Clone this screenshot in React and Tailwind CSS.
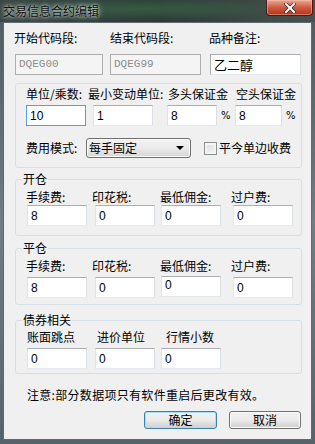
import React from "react";

const font = { fontFamily: '"Noto Sans CJK SC", "Liberation Sans", sans-serif' };

const TextBox = ({ value, width = "w-[60px]", disabled, focused, className = "" }) => {
  let border = "border-[#abadb3] border-t-[#abadb3] border-b-[#e3e9ef] border-r-[#dbdfe6] border-l-[#e2e3ea]";
  if (focused) border = "border-[#569de5]";
  if (disabled) border = "border-[#afafaf]";
  return (
    <div
      className={`${width} h-[21px] border ${border} ${
        disabled ? "bg-[#f4f4f4] text-[#8c8c8c]" : "bg-white text-black"
      } flex items-center pl-[3px] leading-none shrink-0 ${className}`}
    >
      {disabled ? (
        <span className="text-[11px]" style={{ fontFamily: '"Liberation Mono", monospace' }}>
          {value}
        </span>
      ) : (
        <span className="text-[12px]" style={{ fontFamily: '"Liberation Sans", "Noto Sans CJK SC", sans-serif' }}>
          {value}
        </span>
      )}
    </div>
  );
};

const Label = ({ children, className = "" }) => (
  <div className={`text-[12px] leading-[16px] text-black whitespace-nowrap shrink-0 ${className}`}>
    {children}
  </div>
);

const Group = ({ title, className = "", children }) => (
  <div className={`relative ml-[11px] w-[287px] border border-[#d5dfe5] rounded-[3px] ${className}`}>
    {title && (
      <div className="absolute left-[6px] -top-[9px] bg-[#f0f0f0] px-[1px] text-[12px] leading-[16px] text-black">
        {title}
      </div>
    )}
    {children}
  </div>
);

const WinButton = ({ children, primary, className = "" }) => (
  <div
    className={`h-[18px] rounded-[3px] border ${
      primary ? "border-[#3c7fb1] shadow-[inset_0_0_0_1px_#a6dff7]" : "border-[#707070] shadow-[inset_0_0_0_1px_#fcfcfc]"
    } bg-gradient-to-b from-[#f2f2f2] via-[#ebebeb] to-[#cfcfcf] flex items-center justify-center text-[12px] text-black ${className}`}
  >
    {children}
  </div>
);

export default function App() {
  return (
    <div
      className="w-[315px] h-[444px] flex flex-col bg-gradient-to-b from-[#4d5a5e] via-[#6f7d84] to-[#55636b] overflow-hidden"
      style={font}
    >
      {/* title bar */}
      <div className="h-[22px] relative bg-gradient-to-r from-[#3a4745] via-[#2c3b36] to-[#46524f] shrink-0">
        <div className="absolute inset-0 bg-[radial-gradient(ellipse_at_45%_40%,rgba(70,150,90,0.35),transparent_60%)]" />
        <div
          className="absolute left-[3px] top-[3px] text-[12px] leading-[16px] text-[#101010]"
          style={{ textShadow: "0 0 6px rgba(230,240,235,0.9), 0 0 3px rgba(230,240,235,0.9)" }}
        >
          交易信息合约编辑
        </div>
        <div className="absolute left-[266px] top-0 w-[47px] h-[16px] rounded-b-[4px] border border-t-0 border-[#4a1b12] bg-gradient-to-b from-[#e7a897] via-[#cf5a3f] to-[#b3311c] flex items-center justify-center shadow-[inset_0_0_0_1px_rgba(255,200,180,0.45)]">
          <svg width="12" height="10" viewBox="0 0 12 10">
            <path d="M2 1 L10 9 M10 1 L2 9" stroke="#3b2a28" strokeWidth="3.6" strokeLinecap="square" />
            <path d="M2 1 L10 9 M10 1 L2 9" stroke="#ffffff" strokeWidth="2" strokeLinecap="square" />
          </svg>
        </div>
      </div>

      {/* client */}
      <div className="flex-1 mx-[3px] mb-[4px] border border-[#5e686e] bg-[#f0f0f0] flex flex-col">
        {/* row 1 */}
        <div className="flex pl-[10px] mt-[7px]">
          <Label className="w-[96px]">开始代码段:</Label>
          <Label className="w-[99px]">结束代码段:</Label>
          <Label>品种备注:</Label>
        </div>
        <div className="flex pl-[11px] mt-[8px]">
          <TextBox value="DQEG00" width="w-[88px]" disabled />
          <div className="w-[7px]" />
          <TextBox value="DQEG99" width="w-[91px]" disabled />
          <div className="w-[9px]" />
          <div className="w-[91px] h-[21px] border border-[#abadb3] border-b-[#e3e9ef] border-r-[#dbdfe6] bg-white flex items-center pl-[3px] text-[13px] leading-none">
            乙二醇
          </div>
        </div>

        {/* group 1 */}
        <Group className="mt-[8px] h-[85px]">
          <div className="flex pl-[10px] mt-[2px]">
            <Label className="w-[62px]">单位/乘数:</Label>
            <Label className="w-[80px]">最小变动单位:</Label>
            <Label className="w-[68px]">多头保证金</Label>
            <Label>空头保证金</Label>
          </div>
          <div className="flex items-center pl-[10px] mt-[3px]">
            <TextBox value="10" width="w-[60px]" focused />
            <div className="w-[7px]" />
            <TextBox value="1" width="w-[60px]" />
            <div className="w-[14px]" />
            <TextBox value="8" width="w-[50px]" />
            <span className="w-[18px] pl-[4px] text-[10px] text-black" style={{ fontFamily: '"DejaVu Sans", sans-serif' }}>%</span>
            <TextBox value="8" width="w-[47px]" />
            <span className="pl-[4px] text-[10px] text-black" style={{ fontFamily: '"DejaVu Sans", sans-serif' }}>%</span>
          </div>
          <div className="flex items-center pl-[10px] mt-[12px]">
            <Label className="w-[60px]">费用模式:</Label>
            <div className="w-[105px] h-[20px] rounded-[3px] border border-[#707070] bg-gradient-to-b from-[#f2f2f2] via-[#ebebeb] to-[#d6d6d6] shadow-[inset_0_0_0_1px_#fbfbfb] flex items-center justify-between pl-[2px] pr-[6px]">
              <span className="text-[12px] leading-none">每手固定</span>
              <svg width="8" height="4" viewBox="0 0 8 4">
                <path d="M0 0 H8 L4 4 Z" fill="#000" />
              </svg>
            </div>
            <div className="ml-[13px] w-[13px] h-[13px] border border-[#8e8f8f] bg-gradient-to-br from-[#dcdcdc] to-[#f6f6f6] shadow-[inset_0_0_0_2px_#f4f4f4]" />
            <Label className="ml-[2px]">平今单边收费</Label>
          </div>
        </Group>

        {/* 开仓 */}
        <Group title="开仓" className="mt-[11px] h-[57px]">
          <div className="flex pl-[10px] mt-[9px]">
            <Label className="w-[66px]">手续费:</Label>
            <Label className="w-[68px]">印花税:</Label>
            <Label className="w-[71px]">最低佣金:</Label>
            <Label>过户费:</Label>
          </div>
          <div className="flex pl-[11px] mt-[0px]">
            <TextBox value="8" />
            <div className="w-[8px]" />
            <TextBox value="0" />
            <div className="w-[6px]" />
            <TextBox value="0" />
            <div className="w-[12px]" />
            <TextBox value="0" />
          </div>
        </Group>

        {/* 平仓 */}
        <Group title="平仓" className="mt-[12px] h-[57px]">
          <div className="flex pl-[10px] mt-[9px]">
            <Label className="w-[66px]">手续费:</Label>
            <Label className="w-[68px]">印花税:</Label>
            <Label className="w-[71px]">最低佣金:</Label>
            <Label>过户费:</Label>
          </div>
          <div className="flex items-start pl-[11px] mt-[3px]">
            <TextBox value="8" />
            <div className="w-[8px]" />
            <TextBox value="0" />
            <div className="w-[6px]" />
            <TextBox value="0" className="-mt-[1px] items-start pt-[2px]" />
            <div className="w-[12px]" />
            <TextBox value="0" />
          </div>
        </Group>

        {/* 债券相关 */}
        <Group title="债券相关" className="mt-[15px] h-[54px]">
          <div className="flex pl-[11px] mt-[8px]">
            <Label className="w-[70px]">账面跳点</Label>
            <Label className="w-[69px]">进价单位</Label>
            <Label>行情小数</Label>
          </div>
          <div className="flex pl-[11px] mt-[3px]">
            <TextBox value="0" />
            <div className="w-[8px]" />
            <TextBox value="0" />
            <div className="w-[6px]" />
            <TextBox value="0" />
          </div>
        </Group>

        <Label className="ml-[23px] mt-[13px] tracking-[0.3px]">注意:部分数据项只有软件重启后更改有效。</Label>

        <div className="flex mt-[8px] ml-[140px]">
          <WinButton primary className="w-[73px]">确定</WinButton>
          <WinButton className="w-[72px] ml-[12px]">取消</WinButton>
        </div>
      </div>
    </div>
  );
}
